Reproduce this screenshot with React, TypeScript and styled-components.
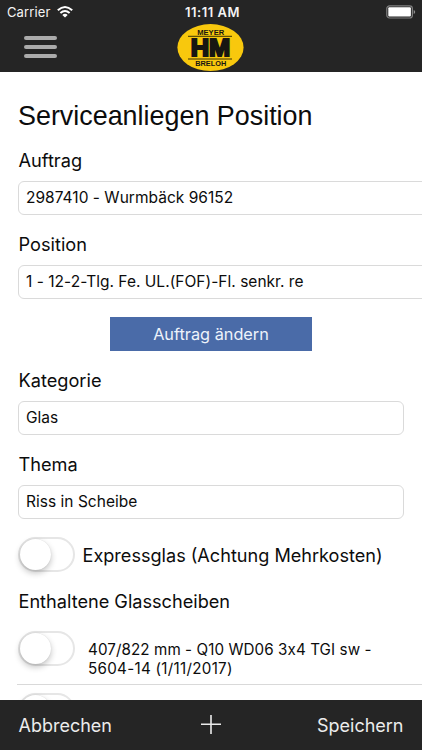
import React from "react";
import styled, { createGlobalStyle } from "styled-components";

const GlobalStyle = createGlobalStyle`
  *, *::before, *::after { box-sizing: border-box; }
  body {
    margin: 0;
    background: #fff;
    color: #0c0c0c;
    font-family: Inter, "Liberation Sans", sans-serif;
    overflow: hidden;
  }
`;

const Screen = styled.div`
  display: flex;
  flex-direction: column;
  width: 422px;
  height: 750px;
  overflow: hidden;
`;

const Header = styled.header`
  flex: none;
  height: 72px;
  background: #252525;
  color: #f4f4f4;
`;

const StatusBar = styled.div`
  display: grid;
  grid-template-columns: 1fr auto 1fr;
  align-items: center;
  height: 24px;
  padding: 0 7px;
`;

const Carrier = styled.div`
  display: flex;
  align-items: center;
  gap: 7px;
  font-size: 13px;
  letter-spacing: 0.12px;
`;

const Clock = styled.div`
  padding-left: 3px;
  font-size: 13px;
  font-weight: 600;
  letter-spacing: 0.5px;
`;

const BatteryIcon = styled.svg`
  justify-self: end;
  margin-right: -1px;
`;

const NavBar = styled.div`
  display: grid;
  grid-template-columns: 1fr auto 1fr;
  height: 48px;
`;

const MenuButton = styled.button`
  display: flex;
  flex-direction: column;
  gap: 5px;
  width: 57px;
  margin: 0;
  padding: 12px 0 0 24px;
  border: 0;
  background: none;
`;

const MenuLine = styled.span`
  height: 4px;
  border-radius: 2px;
  background: #ababab;
`;

const Content = styled.main`
  flex: 1;
  min-height: 0;
  padding: 26px 18px 0;
  overflow: hidden;
`;

const Title = styled.h1`
  margin: 0 0 2px;
  font: 400 26.9px/36px "Liberation Sans", sans-serif;
  white-space: nowrap;
`;

const FieldGroup = styled.section<{ $wide?: boolean }>`
  display: flex;
  flex-direction: column;
  height: 84.2px;
  width: ${(p) => (p.$wide ? "430px" : "386px")};
`;

const Label = styled.label`
  height: 45px;
  padding: 11px 0 0 0.5px;
  font-size: 18.2px;
  line-height: 26px;
  white-space: nowrap;
`;

const Field = styled.div`
  height: 34px;
  padding: 0 7px;
  border: 1px solid #dadada;
  border-radius: 6px;
  font-size: 15.5px;
  line-height: 32.5px;
  letter-spacing: 0.02px;
  white-space: nowrap;
`;

const ChangeButton = styled.button`
  display: block;
  width: 202px;
  height: 34px;
  margin: 12.8px 0 5px 92px;
  padding: 0;
  border: 0;
  background: #4a6ba8;
  color: #eef3fb;
  font: 400 16.3px/34px Inter, sans-serif;
`;

const ExpressRow = styled.div`
  display: flex;
  align-items: center;
  gap: 7.5px;
  height: 35px;
  margin-top: 12px;
  font-size: 18.1px;
  line-height: 26px;
  white-space: nowrap;
`;

const ExpressLabel = styled.span`
  padding-top: 1px;
`;

const Switch = styled.span`
  flex: none;
  display: block;
  width: 57px;
  height: 35px;
  border: 2px solid #e6e6e6;
  border-radius: 18px;
`;

const Knob = styled.span`
  display: block;
  width: 31px;
  height: 31px;
  border-radius: 50%;
  background: #fff;
  box-shadow: 0 3px 6px rgba(0, 0, 0, 0.24), 0 0 1px rgba(0, 0, 0, 0.15);
`;

const SectionLabel = styled.h2`
  margin: 16px 0 1px;
  padding-left: 0.5px;
  font-size: 18.15px;
  font-weight: 400;
  line-height: 26px;
  white-space: nowrap;
`;

const PaneRow = styled.div<{ $first?: boolean }>`
  display: flex;
  gap: 13px;
  height: ${(p) => (p.$first ? "70px" : "63px")};
  margin: 0 -18px 0 -1px;
  padding: ${(p) => (p.$first ? "16px" : "8px")} 0 0 1px;
  border-bottom: 1px solid #d9d9d9;
`;

const PaneText = styled.div`
  padding-top: 9px;
  font-size: 15.2px;
  line-height: 19px;
  letter-spacing: 0.08px;
  white-space: nowrap;
`;

const Dimensions = styled.span`
  font-feature-settings: "calt" 0;
`;

const PaneDetail = styled.div`
  letter-spacing: 0.28px;
`;

const Footer = styled.footer`
  flex: none;
  display: grid;
  grid-template-columns: 1fr 20px 1fr;
  align-items: center;
  height: 50px;
  padding: 0 18px;
  background: #252525;
`;

const FooterButton = styled.button<{ $end?: boolean }>`
  justify-self: ${(p) => (p.$end ? "end" : "start")};
  padding: 1px 0.5px 0;
  border: 0;
  background: none;
  color: #ececec;
  font: 400 18px/26px Inter, sans-serif;
`;

const WifiIcon = () => (
  <svg width="16" height="12" viewBox="0 0 16 12" fill="none" stroke="#fff" strokeWidth="2">
    <path d="M.8 4.3Q8-2.2 15.2 4.3M3.4 7Q8 2.9 12.6 7" />
    <path d="M8 11.6 5.3 8.9Q8 6.7 10.7 8.9Z" fill="#fff" stroke="none" />
  </svg>
);

const Battery = () => (
  <BatteryIcon width="30" height="14" viewBox="0 0 30 14">
    <rect x=".8" y=".8" width="25.6" height="12.2" rx="2.8" fill="none" stroke="#808080" strokeWidth="1.2" />
    <rect x="2.3" y="2.3" width="22.6" height="9.2" rx="1" fill="#fff" />
    <path d="M27.7 5v4q1.5-.6 1.5-2t-1.5-2Z" fill="#909090" />
  </BatteryIcon>
);

const Logo = () => (
  <svg width="68" height="48" viewBox="0 0 68 48">
    <ellipse cx="33.5" cy="23.6" rx="33.1" ry="23.5" fill="#f8c80d" />
    <path d="M11 12.3h44M11 35h44" stroke="#242008" strokeWidth="0.9" />
    <g fill="#171612" fontFamily="Liberation Sans, sans-serif" fontWeight="700" fontSize="8" textAnchor="middle">
      <text x="33.7" y="10.6" textLength="27" lengthAdjust="spacingAndGlyphs">MEYER</text>
      <text x="33.7" y="42.2" textLength="31" lengthAdjust="spacingAndGlyphs">BRELOH</text>
      <text x="33.5" y="32" fontSize="23.5" stroke="#171612" strokeWidth="2" textLength="39.5" lengthAdjust="spacingAndGlyphs">HM</text>
    </g>
  </svg>
);

const PlusIcon = () => (
  <svg width="20" height="20" viewBox="0 0 20 20" stroke="#ececec" strokeWidth="1.6">
    <path d="M10 0v19M0 9.3h20" />
  </svg>
);

const Toggle = () => (
  <Switch role="switch" aria-checked="false">
    <Knob />
  </Switch>
);

type FormFieldProps = {
  label: string;
  value: string;
  wide?: boolean;
};

const FormField = ({ label, value, wide }: FormFieldProps) => (
  <FieldGroup $wide={wide}>
    <Label>{label}</Label>
    <Field>{value}</Field>
  </FieldGroup>
);

export default function App() {
  return (
    <>
      <GlobalStyle />
      <Screen>
        <Header>
          <StatusBar>
            <Carrier>
              Carrier
              <WifiIcon />
            </Carrier>
            <Clock>11:11 AM</Clock>
            <Battery />
          </StatusBar>
          <NavBar>
            <MenuButton aria-label="Menü">
              <MenuLine />
              <MenuLine />
              <MenuLine />
            </MenuButton>
            <Logo />
          </NavBar>
        </Header>
        <Content>
          <Title>Serviceanliegen Position</Title>
          <FormField wide label="Auftrag" value="2987410 - Wurmbäck 96152" />
          <FormField wide label="Position" value="1 - 12-2-Tlg. Fe. UL.(FOF)-Fl. senkr. re" />
          <ChangeButton>Auftrag ändern</ChangeButton>
          <FormField label="Kategorie" value="Glas" />
          <FormField label="Thema" value="Riss in Scheibe" />
          <ExpressRow>
            <Toggle />
            <ExpressLabel>Expressglas (Achtung Mehrkosten)</ExpressLabel>
          </ExpressRow>
          <SectionLabel>Enthaltene Glasscheiben</SectionLabel>
          <PaneRow $first>
            <Toggle />
            <PaneText>
              407/822 mm - Q10 WD06 <Dimensions>3x4</Dimensions> TGI sw -
              <PaneDetail>5604-14 (1/11/2017)</PaneDetail>
            </PaneText>
          </PaneRow>
          <PaneRow>
            <Toggle />
          </PaneRow>
        </Content>
        <Footer>
          <FooterButton>Abbrechen</FooterButton>
          <PlusIcon />
          <FooterButton $end>Speichern</FooterButton>
        </Footer>
      </Screen>
    </>
  );
}
